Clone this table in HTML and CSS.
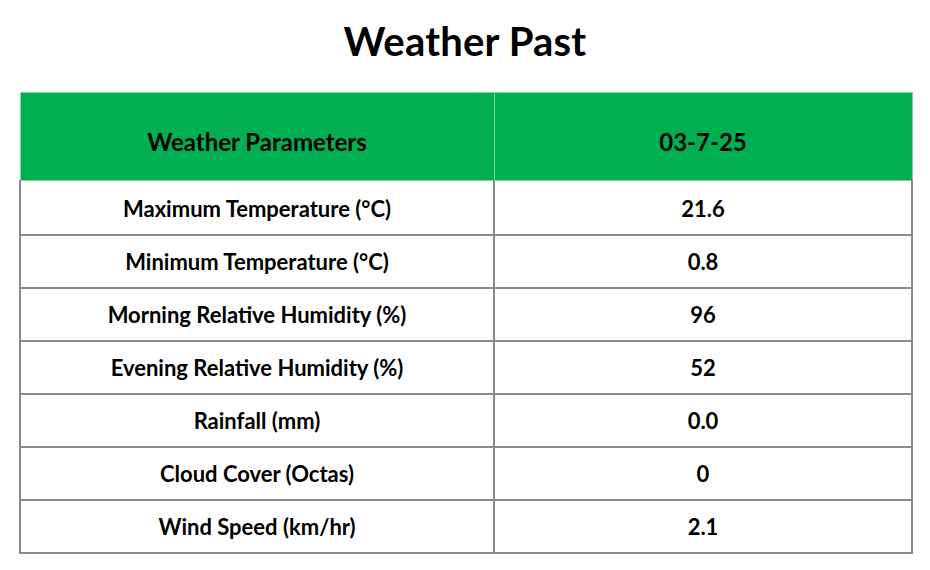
FILE: index.html
```html
<!DOCTYPE html>
<html>
<head>
<meta charset="utf-8">
<link rel="stylesheet" href="styles.css">
</head>
<body>
<h1 class="title">Weather Past</h1>
<table class="wx">
  <thead>
    <tr><th>Weather Parameters</th><th>03-7-25</th></tr>
  </thead>
  <tbody>
    <tr><td>Maximum Temperature (°C)</td><td>21.6</td></tr>
    <tr><td>Minimum Temperature (°C)</td><td>0.8</td></tr>
    <tr><td>Morning Relative Humidity (%)</td><td>96</td></tr>
    <tr><td>Evening Relative Humidity (%)</td><td>52</td></tr>
    <tr><td>Rainfall (mm)</td><td>0.0</td></tr>
    <tr><td>Cloud Cover (Octas)</td><td>0</td></tr>
    <tr><td>Wind Speed (km/hr)</td><td>2.1</td></tr>
  </tbody>
</table>
</body>
</html>
```
FILE: styles.css
```css
html, body { margin: 0; padding: 0; background: #fff; }
body { font-family: Lato, "Open Sans", sans-serif; color: #000; width: 930px; height: 570px; overflow: hidden; }
.title { margin: 0; height: 92px; box-sizing: border-box; padding-top: 17px; text-align: center; font-size: 40px; font-weight: 700; line-height: 48px; letter-spacing: 0.2px; }
.wx { margin-left: 19px; width: 894px; border-collapse: collapse; table-layout: fixed; }
.wx th, .wx td { text-align: center; font-weight: 700; padding: 0; }
.wx th:first-child, .wx td:first-child { width: 474px; }
.wx th { background: #00b050; height: 88px; box-sizing: border-box; padding-top: 10px; font-size: 24px; border: 1px solid #7fd3a0; }
.wx td { font-size: 22px; border: 2px solid #8a8a8a; height: 51px; }
.wx tbody tr:first-child td { border-top: none; height: 52px; padding-top: 1px; }
```
